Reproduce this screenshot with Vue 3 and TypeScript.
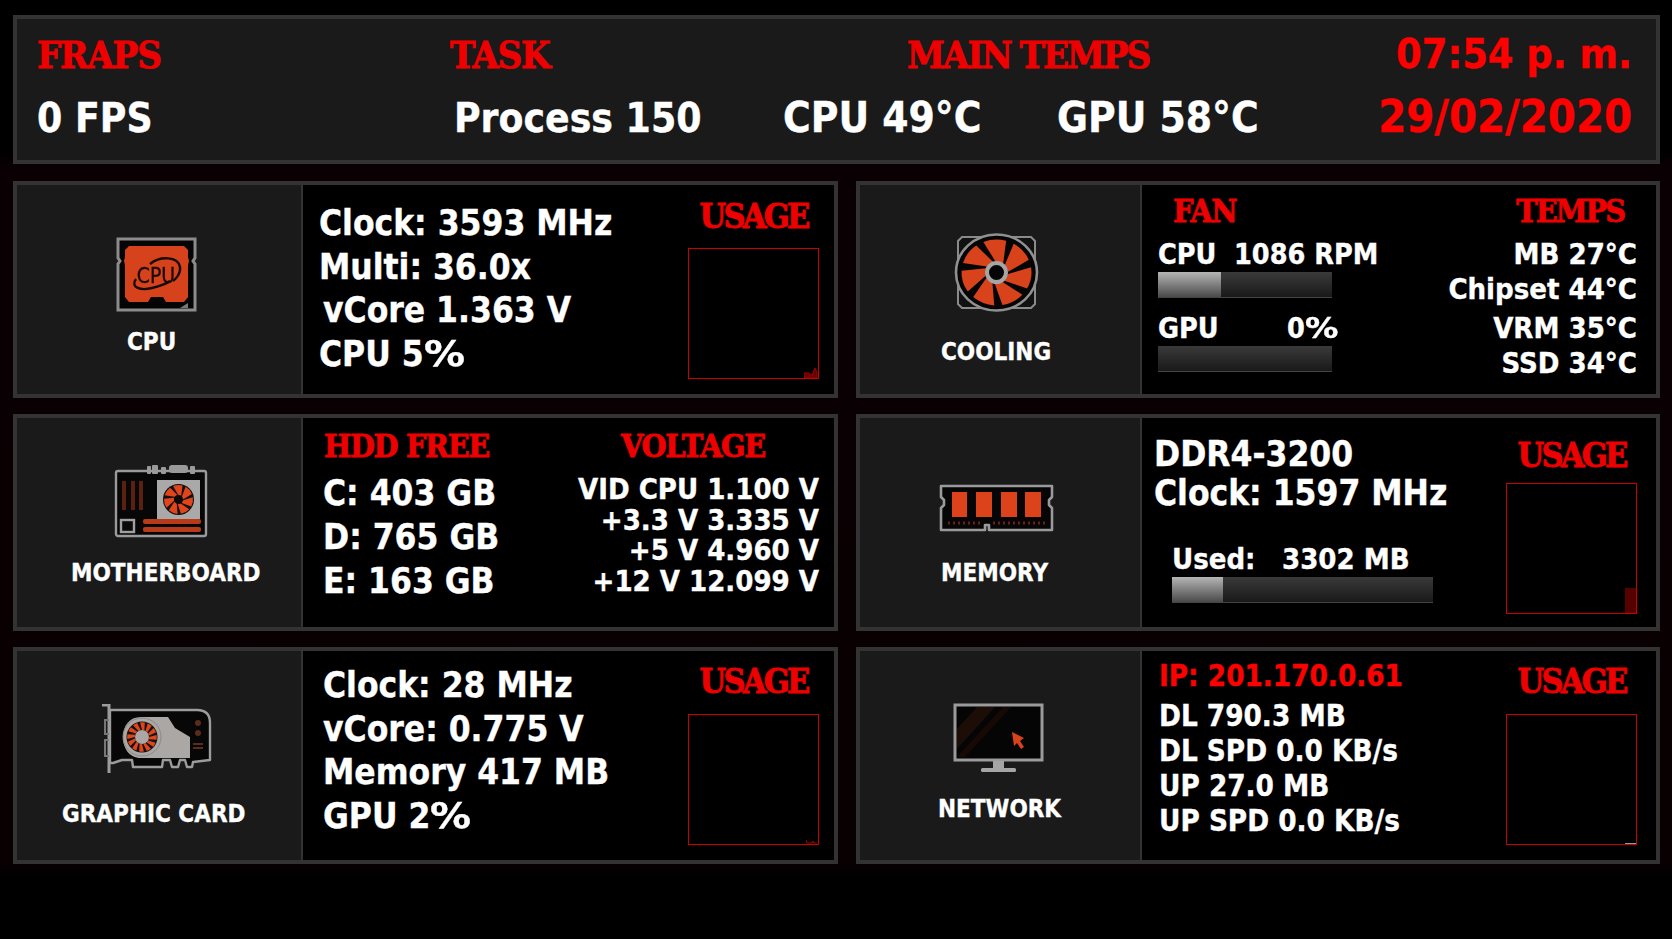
<script setup lang="ts">
const blades: number[] = [0, 51.43, 102.86, 154.29, 205.71, 257.14, 308.57]
const cpuLines = ['Clock: 3593 MHz', 'Multi: 36.0x', 'vCore 1.363 V', 'CPU 5']
const gpuLines = ['Clock: 28 MHz', 'vCore: 0.775 V', 'Memory 417 MB', 'GPU 2']
const drives = ['C: 403 GB', 'D: 765 GB', 'E: 163 GB']
const volts = ['VID CPU 1.100 V', '+3.3 V 3.335 V', '+5 V 4.960 V', '+12 V 12.099 V']
const temps = ['MB 27°C', 'Chipset 44°C', 'VRM 35°C', 'SSD 34°C']
const net = ['DL 790.3 MB', 'DL SPD 0.0 KB/s', 'UP 27.0 MB', 'UP SPD 0.0 KB/s']
</script>

<template>
  <div class="page">
    <header class="top">
      <div class="row r1">
        <h1 class="st">FRAPS</h1>
        <h1 class="st">TASK</h1>
        <h1 class="st mt">MAIN TEMPS</h1>
        <div class="clock">07:54 p. m.</div>
      </div>
      <div class="row r2">
        <span>0 FPS</span>
        <span>Process 150</span>
        <span class="tmp">CPU 49°C</span>
        <span class="tmp">GPU 58°C</span>
        <span class="clock date">29/02/2020</span>
      </div>
    </header>

    <main class="grid">
      <!-- CPU -->
      <section class="card">
        <div class="panel p-cpu">
          <svg class="ico" width="81" height="75" viewBox="0 0 81 75">
            <path d="M2 2H79V21L77 24L79 27V73H2V27L4 24L2 21Z" fill="#050505" stroke="#8c8c8c" stroke-width="3" />
            <path d="M13 9H68L72 13V20L73 24L72 28V60L68 65H50L47 60H35L32 65H13L9 60V28L8 24L9 20V13Z" fill="#d6421b" />
            <path d="M34 27C44 19 62 19 64 30C65 36 60 42 57 44M20 42C14 50 24 54 36 51C44 49 50 47 54 44" fill="none" stroke="#180a05" stroke-width="2.4" />
            <text x="40" y="46" text-anchor="middle" class="cpu-t">CPU</text>
            <path d="M64 71L72 66V71Z" fill="#777" />
          </svg>
          <div class="lbl">CPU</div>
        </div>
        <div class="body">
          <div class="col cl">
            <div v-for="(l, i) in cpuLines" :key="l" :class="{ in4: i === 2 }">{{ l }}<span v-if="i === 3" class="pct">%</span></div>
          </div>
          <div class="usage u-cpu">
            <h2 class="st">USAGE</h2>
            <div class="chart">
              <svg width="14" height="12" viewBox="0 0 14 12"><path d="M0 12V7H5L8 9L11 2L13 6V12Z" fill="#6e0000" stroke="#c00000" stroke-width=".7" /></svg>
            </div>
          </div>
        </div>
      </section>

      <!-- COOLING -->
      <section class="card">
        <div class="panel pr p-fan">
          <svg class="ico" width="85" height="79" viewBox="0 0 85 79">
            <path d="M8 4H77L81 8V71L77 75H8L4 71V8Z" fill="#111" stroke="#8a8a8a" stroke-width="2" />
            <ellipse cx="42.5" cy="39.5" rx="40.5" ry="38" fill="#050505" stroke="#909090" stroke-width="2.6" />
            <g transform="translate(42.5 39.5) scale(1.06 1)">
              <path v-for="a in blades" :key="a" :transform="`rotate(${a})`" d="M-1 -11L-12.4 -30.6A33 33 0 0 1 9.1 -31.7L6.3 -9Z" fill="#d8431c" />
            </g>
            <circle cx="42.5" cy="39.5" r="9.5" fill="#050505" stroke="#a5a5a5" stroke-width="4" />
          </svg>
          <div class="lbl">COOLING</div>
        </div>
        <div class="body b-fan">
          <div class="fan-l">
            <h3 class="st sm fan-h">FAN</h3>
            <div class="t28"><span class="k1">CPU</span><span>1086 RPM</span></div>
            <div class="bar b174"><div class="fill" style="width: 63px"></div></div>
            <div class="t28 g2"><span class="k2">GPU</span><span>0<span class="pct">%</span></span></div>
            <div class="bar b174"></div>
          </div>
          <div class="fan-r">
            <h3 class="st sm temps-h">TEMPS</h3>
            <div class="tlist">
              <div v-for="t in temps" :key="t">{{ t }}</div>
            </div>
          </div>
        </div>
      </section>

      <!-- MOTHERBOARD -->
      <section class="card">
        <div class="panel p-mb">
          <svg class="ico" width="94" height="73" viewBox="0 0 94 73">
            <path d="M4 6H90A2 2 0 0 1 92 8V69A2 2 0 0 1 90 71H4A2 2 0 0 1 2 69V8A2 2 0 0 1 4 6Z" fill="#070707" stroke="#9a9a9a" stroke-width="2.4" />
            <g fill="#9a9a9a">
              <rect x="33" y="1" width="4" height="8" rx="1" /><rect x="38" y="0" width="6" height="9" rx="1" />
              <rect x="47" y="2" width="5" height="7" rx="1" /><rect x="55" y="0" width="19" height="8" rx="3" />
              <rect x="76" y="1" width="5" height="8" rx="1" />
            </g>
            <g fill="#5a2010">
              <rect x="8" y="16" width="4" height="29" /><rect x="17" y="16" width="4" height="29" /><rect x="25" y="16" width="4" height="29" />
            </g>
            <rect x="43" y="15" width="43" height="39" fill="#a9a9a9" />
            <circle cx="64.5" cy="34.5" r="15.5" fill="#111" />
            <g transform="translate(64.5 34.5) scale(.44)">
              <path v-for="a in blades" :key="a" :transform="`rotate(${a})`" d="M-1 -11L-12.4 -30.6A33 33 0 0 1 9.1 -31.7L6.3 -9Z" fill="#e0451c" />
            </g>
            <circle cx="64.5" cy="34.5" r="3.6" fill="#0a0a0a" />
            <rect x="7" y="55" width="13" height="12" fill="#0a0a0a" stroke="#a0a0a0" stroke-width="2.4" />
            <rect x="29" y="54" width="58" height="5" rx="2" fill="#b83a18" />
            <rect x="29" y="62" width="58" height="5" rx="2" fill="#b83a18" />
          </svg>
          <div class="lbl">MOTHERBOARD</div>
        </div>
        <div class="body b-mb">
          <div class="hdd">
            <h3 class="st sm hh">HDD FREE</h3>
            <div class="drv">
              <div v-for="d in drives" :key="d">{{ d }}</div>
            </div>
          </div>
          <div class="volt">
            <h3 class="st sm vh">VOLTAGE</h3>
            <div class="vlist">
              <div v-for="v in volts" :key="v">{{ v }}</div>
            </div>
          </div>
        </div>
      </section>

      <!-- MEMORY -->
      <section class="card">
        <div class="panel pr p-mem">
          <svg class="ico" width="115" height="48" viewBox="0 0 115 48">
            <path d="M2 2H113V13L110 16V21L113 24V46H50V41H46V46H2V24L5 21V16L2 13Z" fill="#060606" stroke="#9a9a9a" stroke-width="2.6" stroke-linejoin="round" />
            <g fill="#dc431b">
              <rect x="13" y="8" width="15" height="25" /><rect x="37" y="8" width="16" height="25" />
              <rect x="62" y="8" width="16" height="25" /><rect x="86" y="8" width="16" height="25" />
            </g>
            <path d="M9 39H44M54 39H106" stroke="#6a2012" stroke-width="3" stroke-dasharray="2 3" />
          </svg>
          <div class="lbl">MEMORY</div>
        </div>
        <div class="body b-mem">
          <div class="mem-l">
            <div class="big">DDR4-3200</div>
            <div class="big">Clock: 1597 MHz</div>
            <div class="used"><span class="k3">Used:</span><span>3302 MB</span></div>
            <div class="bar b261"><div class="fill" style="width: 51px"></div></div>
          </div>
          <div class="usage u-mem">
            <h2 class="st">USAGE</h2>
            <div class="chart"><i class="mbar"></i></div>
          </div>
        </div>
      </section>

      <!-- GRAPHIC CARD -->
      <section class="card">
        <div class="panel p-gpu">
          <svg class="ico" width="111" height="70" viewBox="0 0 111 70">
            <path d="M9 6H96Q109 6 109 19V56L92 58L91 63H86L84 56H79L77 63H71L69 56H62L61 63H32L31 56H21L12 59H9Z" fill="#070707" stroke="#9c9c9c" stroke-width="2.4" stroke-linejoin="round" />
            <path d="M1 1H8V69" fill="none" stroke="#9c9c9c" stroke-width="3" />
            <path d="M8 16H4V30H8M8 36H4V52H8" fill="none" stroke="#777" stroke-width="2" />
            <path d="M40 13H67L74 24L89 33V54H40C28 54 22 44 22 33C22 22 28 13 40 13Z" fill="#aaa7a4" />
            <circle cx="41" cy="33" r="19" fill="#aaa7a4" stroke="#8a8a8a" stroke-width="1" />
            <circle cx="41" cy="33" r="15.5" fill="#141414" />
            <g transform="translate(41 33) scale(.47)">
              <path v-for="a in [0,30,60,90,120,150,180,210,240,270,300,330]" :key="a" :transform="`rotate(${a})`" d="M0 -15L-4 -31A32 32 0 0 1 6 -31L5 -15Z" fill="#e0451c" />
            </g>
            <circle cx="41" cy="33" r="7" fill="#aaa7a4" />
            <circle cx="97" cy="19" r="3" fill="#5a2c1c" /><circle cx="97" cy="29" r="3" fill="#5a2c1c" />
            <path d="M92 40H102M92 44H102" stroke="#5a2c1c" stroke-width="2" />
          </svg>
          <div class="lbl">GRAPHIC CARD</div>
        </div>
        <div class="body">
          <div class="col cg">
            <div v-for="(l, i) in gpuLines" :key="l">{{ l }}<span v-if="i === 3" class="pct">%</span></div>
          </div>
          <div class="usage u-gpu">
            <h2 class="st">USAGE</h2>
            <div class="chart">
              <svg width="12" height="5" viewBox="0 0 12 5"><path d="M0 1L1 4H6L7 2L8 4H11" fill="none" stroke="#b00000" stroke-width="1" /></svg>
            </div>
          </div>
        </div>
      </section>

      <!-- NETWORK -->
      <section class="card">
        <div class="panel pr p-net">
          <svg class="ico" width="91" height="71" viewBox="0 0 91 71">
            <rect x="2" y="2" width="87" height="55" fill="#050505" stroke="#9b9b9b" stroke-width="3" />
            <path d="M4 26L24 4H42L4 46Z" fill="#1c0d07" />
            <path d="M4 54L50 4H58L12 54Z" fill="#170a05" />
            <path d="M59 29L71 35L67 38L71 44L68 46L64 40L61 43Z" fill="#d8431c" />
            <rect x="40" y="58" width="11" height="8" fill="#a5a5a5" />
            <rect x="28" y="65" width="35" height="4" rx="1.5" fill="#a5a5a5" />
          </svg>
          <div class="lbl">NETWORK</div>
        </div>
        <div class="body">
          <div class="net">
            <div class="ip">IP: 201.170.0.61</div>
            <div v-for="n in net" :key="n">{{ n }}</div>
          </div>
          <div class="usage u-gpu">
            <h2 class="st">USAGE</h2>
            <div class="chart"><i class="nbar"></i></div>
          </div>
        </div>
      </section>
    </main>
  </div>
</template>

<style scoped>
.page {
  width: 1672px;
  height: 939px;
  padding: 15px 12px 0 13px;
  box-sizing: border-box;
  background: linear-gradient(#000 0, #000 150px, #0a0003 170px, #090002 860px, #000 880px);
  font-family: "DejaVu Sans", "Noto Sans", sans-serif;
  font-stretch: condensed;
  font-weight: 700;
  color: #fff;
  -webkit-text-stroke: 0.35px currentColor;
  overflow: hidden;
}
h1, h2, h3 { margin: 0; font-weight: 700; }
.st {
  font-family: "DejaVu Serif", "Liberation Serif", serif;
  font-stretch: condensed;
  color: #ef0000;
  -webkit-text-stroke: 0.8px #ef0000;
  font-size: 38px;
  line-height: 42px;
  letter-spacing: -1.2px;
  white-space: nowrap;
}
.st.mt { letter-spacing: -2px; word-spacing: -1px; }
.st.sm { font-size: 32px; line-height: 35px; letter-spacing: -1.3px; }
.top {
  height: 149px;
  box-sizing: border-box;
  border: 4px solid #333;
  background: #1a1a1a;
  padding: 14px 24px 0 20px;
}
.row { display: grid; align-items: baseline; }
.r1 { grid-template-columns: 413px 457px 1fr auto; }
.r2 {
  grid-template-columns: 417px 329px 274px 1fr auto;
  margin-top: 16px;
  font-size: 40.4px;
  line-height: 50px;
}
.tmp { font-size: 42px; }
.clock { color: #f00; font-size: 41px; line-height: 42px; justify-self: end; }
.r2 .date { font-size: 44.8px; line-height: 50px; }
.grid {
  display: grid;
  grid-template-columns: 825px 804px;
  grid-auto-rows: 217px;
  column-gap: 18px;
  row-gap: 16px;
  margin-top: 17px;
}
.card {
  display: flex;
  border: 4px solid #333;
  background: #000;
  box-sizing: border-box;
}
.panel {
  width: 284px;
  flex: none;
  background: #1a1a1a;
  border-right: 2px solid #333;
  display: flex;
  flex-direction: column;
  align-items: flex-start;
}
.panel.pr { width: 280px; }
.ico { display: block; filter: blur(0.4px); }
.lbl { font-size: 24px; line-height: 24px; white-space: nowrap; }
.p-cpu .ico { margin: 52px 0 0 99px; }
.p-cpu .lbl { margin: 18px 0 0 110px; }
.p-mb .ico { margin: 47px 0 0 97px; }
.p-mb .lbl { margin: 23px 0 0 54px; }
.p-gpu .ico { margin: 53px 0 0 84px; }
.p-gpu .lbl { margin: 28px 0 0 45px; }
.p-fan .ico { margin: 48px 0 0 94px; }
.p-fan .lbl { margin: 28px 0 0 81px; }
.p-mem .ico { margin: 66px 0 0 79px; }
.p-mem .lbl { margin: 29px 0 0 81px; }
.p-net .ico { margin: 52px 0 0 93px; }
.p-net .lbl { margin: 23px 0 0 78px; }
.cpu-t {
  font-family: "DejaVu Sans", sans-serif;
  font-stretch: condensed;
  font-size: 21px;
  font-weight: 400;
  fill: #180a05;
  stroke: #180a05;
  stroke-width: 0.3px;
}
.pct {
  display: inline-block;
  transform: scaleX(1.3);
  transform-origin: left center;
}
.body {
  flex: 1;
  display: flex;
  justify-content: space-between;
  min-width: 0;
}
.col { font-size: 35px; line-height: 43.6px; white-space: nowrap; }
.cl { padding: 17px 0 0 16px; }
.cg { padding: 13px 0 0 20px; }
.in4 { margin-left: 4px; }
.usage {
  width: 131px;
  margin-right: 15px;
  display: flex;
  flex-direction: column;
  justify-content: space-between;
  padding-bottom: 15px;
  box-sizing: border-box;
  text-align: center;
}
.usage h2 { font-size: 34px; line-height: 38px; letter-spacing: -2.8px; }
.u-cpu { padding-top: 12px; }
.u-gpu { padding-top: 11px; }
.u-mem { padding-top: 18px; padding-bottom: 13px; margin-right: 19px; }
.u-gpu:last-child { margin-right: 15px; }
.card:nth-child(6) .usage { margin-right: 19px; }
.chart {
  height: 131px;
  box-sizing: border-box;
  border: 1px solid #c80000;
  display: flex;
  justify-content: flex-end;
  align-items: flex-end;
}
.chart svg { display: block; }
.mbar { display: block; width: 11px; height: 25px; background: #560000; }
.nbar { display: block; width: 11px; height: 1px; background: #999; }
.b-fan { padding: 9px 19px 0 16px; }
.fan-h { margin-left: 15px; }
.t28 { font-size: 28.5px; line-height: 28px; margin-top: 12px; white-space: nowrap; }
.t28.g2 { margin-top: 17px; }
.k1 { display: inline-block; width: 76px; }
.k2 { display: inline-block; width: 129px; }
.bar {
  height: 26px;
  margin-top: 3px;
  box-sizing: border-box;
  background: linear-gradient(#3a3a3a, #191919);
  border-bottom: 1px solid #444;
}
.b174 { width: 174px; }
.b261 { width: 261px; }
.fill { height: 100%; background: linear-gradient(#b5b5b5, #4a4a4a); }
.fan-r { text-align: right; }
.st.sm.temps-h { margin-right: 13px; letter-spacing: -2px; }
.tlist { margin-top: 11px; font-size: 29px; line-height: 28px; white-space: nowrap; }
.tlist div { margin-bottom: 7px; }
.tlist div:nth-child(3) { margin-top: 11px; }
.b-mb { padding: 11px 15px 0 20px; }
.hh { margin-left: 1px; }
.drv { margin-top: 7px; font-size: 35px; line-height: 44px; white-space: nowrap; }
.volt { text-align: right; }
.vh { margin-right: 54px; }
.vlist { margin-top: 10px; font-size: 29px; line-height: 30.5px; white-space: nowrap; }
.mem-l { padding: 17px 0 0 12px; }
.big { font-size: 35px; line-height: 39px; white-space: nowrap; }
.used { margin: 32px 0 0 18px; font-size: 29px; line-height: 29px; white-space: nowrap; }
.k3 { display: inline-block; width: 110px; }
.mem-l .bar { margin: 3px 0 0 18px; }
.net { padding: 8px 0 0 17px; font-size: 29.3px; line-height: 35px; white-space: nowrap; }
.ip { color: #f00; margin-bottom: 5px; }
</style>

<style>
html, body { margin: 0; background: #000; overflow: hidden; }
</style>
